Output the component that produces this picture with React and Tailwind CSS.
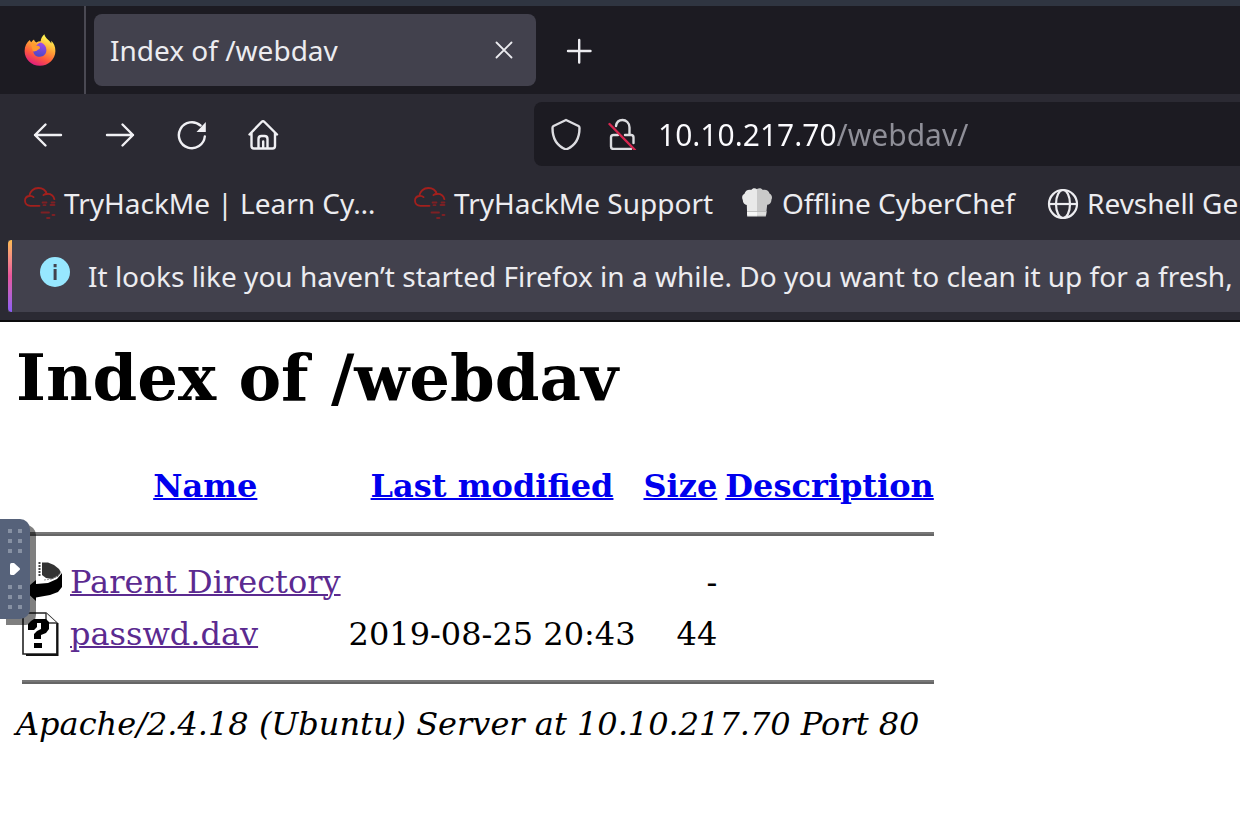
import React from 'react';

const stroke = {
  fill: 'none',
  stroke: 'currentColor',
  strokeWidth: 2.4,
  strokeLinecap: 'round',
  strokeLinejoin: 'round',
};

function Icon({ children, className = 'size-8', ...rest }) {
  return (
    <svg viewBox="0 0 32 32" aria-hidden="true" className={`shrink-0 ${className}`} {...rest}>
      {children}
    </svg>
  );
}

function FirefoxLogo() {
  return (
    <Icon>
      <defs>
        <linearGradient id="flame" x1="0.8" y1="0.05" x2="0.35" y2="1">
          <stop offset="0.1" stopColor="#fff04f" />
          <stop offset="0.4" stopColor="#ffa436" />
          <stop offset="0.7" stopColor="#ff5a3c" />
          <stop offset="1" stopColor="#e01c7e" />
        </linearGradient>
        <linearGradient id="globe" x1="0.6" y1="0" x2="0.4" y2="1">
          <stop offset="0" stopColor="#a14bea" />
          <stop offset="1" stopColor="#4a48c4" />
        </linearGradient>
      </defs>
      <path
        fill="url(#flame)"
        d="M20.400.2c-2.200 1.800-3.600 4.200-3.700 7-1.800.1-3.200.5-4.500 1.200C11 7.600 10.300 6.600 10 5.400 8.800 6.100 7.900 7.100 7.300 8.200 6.500 7.700 6 7 5.800 6 2.800 8.300.6 12 .6 17c0 8.300 6.800 14.800 15.300 14.800S31.400 25.300 31.400 17c0-4.400-1.600-7.800-4.200-10.200.2 1.100.2 1.800 0 2.600C25.800 6.200 21.200 4.600 20.400.2z"
      />
      <path
        fill="url(#globe)"
        d="M17 8.600c3.300 1.200 5.400 4 5.400 7.500 0 4-2.900 6.700-6.500 6.700-3.800 0-6.600-2.500-6.600-5.900 1.700.6 3.500 0 4.700-1.200l1.500-.9c-.3-1.700-2-2.100-3.900-1.900C12.800 10.700 14.600 9 17 8.600z"
      />
      <path fill="#ff9a2e" d="M6.800 9.400c2.600-.9 4.600 0 5.700 2.500 1.400-.2 3.700.3 3.500 2-.5 1.200-2.200 1-3.200 2.300-1.200 1.300-2.900 1.300-4 .8z" />
    </Icon>
  );
}

function CloudLogo() {
  return (
    <Icon fill="none" stroke="#a3201d" strokeWidth="1.8" strokeLinecap="round">
      <path d="M15.500 18.800H6.500C3 18.800 1 16.600 1 13.800c0-2.600 1.800-4.500 4.200-4.800C5.800 4.200 9.800 1 14.400 1c4.400 0 7.300 2.400 8.400 6 3.800-.3 6.700 2 7.600 5.200" />
      <path d="M6 8.800c1.500-.1 2.700.4 3.600 1.300M19.400 8.200c1-.9 2.100-1.200 3.400-1.200" />
      <path stroke="#7d2024" d="M18.500 15.500h4M27.500 15.500h3M19.500 18.200h2M26.500 18h4M17.500 25.500h7.500M28.500 28h2M23 31h2.500" />
    </Icon>
  );
}

function ChefHat() {
  return (
    <Icon>
      <path fill="#e9e9e9" d="M15 2.200C13 .6 10.500 1 9.200 3 6 2.200 3 4 2.500 6.800 0 8-.4 10.800.8 13c0 3 1.800 4.600 4 5l.4 11.500H15z" />
      <path fill="#c9c9c9" d="M15 2c2-1.500 4.600-1 5.800 1 3.200-.8 6.200.8 6.700 3.600 2.500 1.200 3.100 4 1.900 6.200.2 3-2 4.700-4.200 5l-1.400 11.700H15z" />
      <path fill="#f7f7f7" d="M5 24.500h10v3.700H5.200z" />
      <path fill="#dedede" d="M15 24.500h9.500l-.4 3.700H15z" />
      <path stroke="#b5b5b5" strokeWidth="0.800" d="M5 24.500h19.500" />
    </Icon>
  );
}

function GlobeIcon() {
  return (
    <Icon fill="none" stroke="#ececf0" strokeWidth="2.200">
      <circle cx="16" cy="17" r="14" />
      <ellipse cx="16" cy="17" rx="7" ry="14" />
      <path d="M2 17h28" />
    </Icon>
  );
}

function BackIcon() {
  return (
    <svg viewBox="0 0 40 44" className="block h-11 w-10" role="img" aria-label="Parent directory">
      <path fill="#333" d="M20 2.500h6l6 2.500 5 4 2 3.500-3 4-6 2.500-6-1-4-3z" />
      <path stroke="#444" strokeWidth="2" strokeDasharray="2 1" d="M17.500 2v15" />
      <path d="M40 13v14l-4 5-8 3-14 2.500v3.500L2 30l12-10v4l12-1 9-4z" />
      <path fill="none" stroke="#999" strokeWidth="1" strokeDasharray="2 1" d="M22 20l8-1 7-4 2-3" />
    </svg>
  );
}

function UnknownIcon() {
  return (
    <svg viewBox="0 0 40 44" className="block h-11 w-10" role="img" aria-label="Unknown file">
      <path fill="#fff" stroke="#222" strokeWidth="1.600" d="M1 1h23l11 10v31H1z" />
      <path fill="none" stroke="#111" strokeWidth="2" d="M4 43h31.500V11" />
      <path fill="#fff" stroke="#333" strokeWidth="1.400" d="M24 1v10h11" />
      <path d="M12 7h12l3 3v7l-3 4-5 2v4h-7v-5l3-3 4-2v-6h-4v4l-3 3H6v-6l3-3z" />
      <path d="M12 31h8v5h-8z" />
    </svg>
  );
}

const bookmarks = [
  { label: 'TryHackMe | Learn Cy…', icon: CloudLogo, size: 'w-[364px]' },
  { label: 'TryHackMe Support', icon: CloudLogo, size: 'w-[302px]' },
  { label: 'Offline CyberChef', icon: ChefHat, size: 'w-[279px]' },
  { label: 'Revshell Generator', icon: GlobeIcon, size: 'w-[300px]' },
];

const dots = [0, 1, 2, 3, 4, 5];

function Dots() {
  return (
    <span className="grid grid-cols-2 gap-1.5">
      {dots.map((d) => (
        <span key={d} className="size-1 bg-[#8791a3]" />
      ))}
    </span>
  );
}

function TabStrip() {
  return (
    <div className="flex h-22 items-stretch bg-[#1c1b22]">
      <div className="flex w-[86px] items-center justify-center border-r-2 border-[#4a4953] pr-1">
        <FirefoxLogo />
      </div>
      <div className="flex flex-1 items-center gap-7 pl-2">
        <div role="tab" aria-selected="true" className="flex h-18 w-[442px] items-center justify-between rounded-lg bg-[#42414d] px-4">
          <span className="text-[28px]">Index of /webdav</span>
          <button type="button" aria-label="Close tab">
            <Icon>
              <path {...stroke} strokeWidth="1.800" d="M8.500 8.500l15 15M23.500 8.500l-15 15" />
            </Icon>
          </button>
        </div>
        <button type="button" aria-label="New tab">
          <Icon>
            <path {...stroke} d="M4 17h22.500M15.200 6v22.500" />
          </Icon>
        </button>
      </div>
    </div>
  );
}

function NavBar() {
  return (
    <div className="flex items-center pt-2 pl-8">
      <div className="flex w-[502px] items-center gap-10 text-[#f0f0f4]">
        <button type="button" aria-label="Back">
          <Icon><path {...stroke} d="M29 17H3M13.500 6.500L3 17l10.500 10.500" /></Icon>
        </button>
        <button type="button" aria-label="Forward">
          <Icon><path {...stroke} d="M3 17h26M18.500 6.500L29 17l-10.500 10.500" /></Icon>
        </button>
        <button type="button" aria-label="Reload">
          <Icon>
            <path {...stroke} d="M28.800 18.500A13 13 0 1 1 24.500 7.500" />
            <path fill="currentColor" d="M29.800 4v10H20.500z" />
          </Icon>
        </button>
        <button type="button" aria-label="Home">
          <Icon>
            <path {...stroke} d="M1.500 16.500L13.500 4q1.500-1.500 3 0L29 16.500M3.500 15v13q0 2.500 2.500 2.500h18.500q2.500 0 2.500-2.500V15M10.500 30V21q0-3 3-3h3q3 0 3 3V30M15.200 23.500V29" />
          </Icon>
        </button>
      </div>
      <label className="flex h-16 flex-1 items-center overflow-hidden rounded-l-lg bg-[#1c1b22] pl-4 text-[#dcdce0]">
        <Icon>
          <path {...stroke} d="M16 2L28.500 8q1 .6 1 2C29.500 20 25 28 16 31.500 7 28 2.500 20 2.500 10q0-1.400 1-2z" />
        </Icon>
        <Icon className="ml-6 size-8">
          <path {...stroke} d="M10 8C10.500 4.500 13 2 16.500 2S23.500 4.800 23.500 9.500V17M19 17h6q2.500 0 2.500 2.500v5.500M12 17H7.500Q5 17 5 19.500V28.500Q5 31 7.500 31H25" />
          <path stroke="#d7264f" strokeWidth="2.400" strokeLinecap="round" d="M3.500 6l25.500 26" />
        </Icon>
        <input
          aria-label="Address"
          defaultValue="10.10.217.70/webdav/"
          className="ml-5 min-w-0 flex-1 bg-linear-to-r from-[#fbfbfe] from-[179px] to-[#8f8f98] to-[179px] bg-clip-text text-[30px] text-transparent outline-none"
        />
      </label>
    </div>
  );
}

function Browser() {
  return (
    <header className="overflow-hidden border-b-2 border-[#0c0c0d] bg-[#2b2a33] font-['Noto_Sans','Open_Sans',sans-serif] text-[#ececf0]">
      <div className="h-1.5 bg-[#2f3541]" />
      <TabStrip />
      <NavBar />
      <nav className="flex h-[74px] items-center gap-[26px] overflow-hidden pl-6">
        {bookmarks.map(({ label, icon: Mark, size }) => (
          <a key={label} href="#" className={`flex shrink-0 items-center gap-2 text-[28px] whitespace-nowrap ${size}`}>
            <Mark />
            {label}
          </a>
        ))}
      </nav>
      <div className="mb-2 ml-2 flex h-18 items-center overflow-hidden bg-[#42414d]">
        <div className="h-full w-1 shrink-0 rounded-l-sm bg-linear-to-b from-[#ffbd4f] via-[#e9559d] to-[#8b5cf6]" />
        <Icon className="mb-2 ml-7 size-8">
          <circle cx="15" cy="16" r="15" fill="#97e7ff" />
          <path fill="#42414d" d="M13.600 8h3v3.200h-3zM13.600 13h3v11h-3z" />
        </Icon>
        <p className="ml-4 text-[28px] whitespace-nowrap">
          It looks like you haven’t started Firefox in a while. Do you want to clean it up for a fresh, like-new experience?
        </p>
      </div>
    </header>
  );
}

function Rule() {
  return (
    <tr>
      <th colSpan="5" className="p-0.5">
        <hr className="my-4 h-1 border-x-0 border-t-2 border-b-2 border-t-[#777] border-b-[#666]" />
      </th>
    </tr>
  );
}

const columns = ['Name', 'Last modified', 'Size', 'Description'];

const files = [
  { icon: BackIcon, name: 'Parent Directory', modified: '', size: '-' },
  { icon: UnknownIcon, name: 'passwd.dav', modified: '2019-08-25 20:43', size: '44' },
];

function Listing() {
  return (
    <main className="px-4 pt-[18px] pb-20 font-['DejaVu_Serif',serif] text-[32px] leading-[37px] text-black">
      <h1 className="mb-[43px] text-[64px] leading-[75px] font-bold">Index of /webdav</h1>
      <table className="border-separate border-spacing-1 whitespace-nowrap">
        <thead>
          <tr className="h-12">
            <th className="p-0.5"><span className="block h-11 w-10" /></th>
            {columns.map((c) => (
              <th key={c} className="p-0.5 font-bold">
                <a href="#" className="text-[#0000ee] underline decoration-2">{c}</a>
              </th>
            ))}
          </tr>
        </thead>
        <tbody>
          <Rule />
          {files.map(({ icon: Mark, name, modified, size }) => (
            <tr key={name}>
              <td className="p-0.5"><Mark /></td>
              <td className="p-0.5">
                <a href="#" className="text-[#5b2a90] underline decoration-2">{name}</a>
              </td>
              <td className="p-0.5 text-right">{modified}</td>
              <td className="p-0.5 text-right">{size}</td>
              <td className="p-0.5" />
            </tr>
          ))}
          <Rule />
        </tbody>
      </table>
      <address className="whitespace-nowrap italic">Apache/2.4.18 (Ubuntu) Server at 10.10.217.70 Port 80</address>
    </main>
  );
}

export default function App() {
  return (
    <div className="relative min-h-screen overflow-hidden bg-white">
      <Browser />
      <Listing />
      <button
        type="button"
        aria-label="Open side panel"
        className="absolute top-[519px] left-0 flex h-[100px] w-[30px] flex-col items-center justify-center gap-2.5 rounded-r-[10px] bg-[#56627a] shadow-[6px_6px_0_rgba(0,0,0,0.5)]"
      >
        <Dots />
        <svg viewBox="0 0 10 12" className="h-3 w-2.5" aria-hidden="true">
          <path fill="#fff" d="M0 1.500Q0 0 1.500 0H4l5.500 5q1 1 0 2L4 12H1.500Q0 12 0 10.500z" />
        </svg>
        <Dots />
      </button>
    </div>
  );
}
